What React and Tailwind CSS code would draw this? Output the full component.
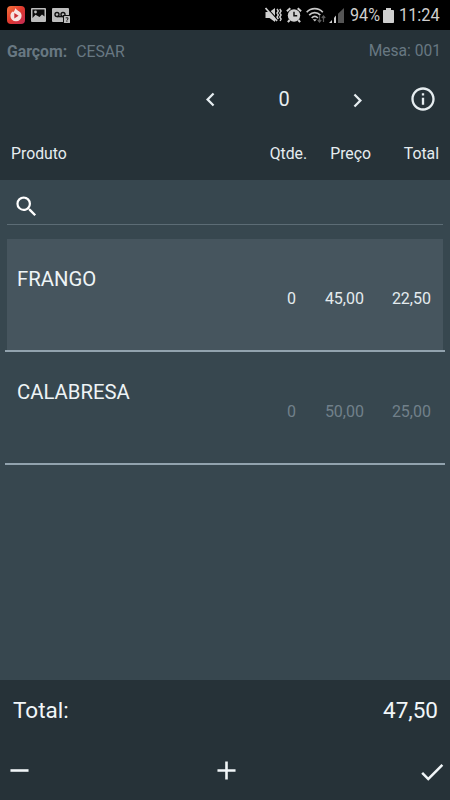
import { useState } from 'react';
import {
  MdAdd,
  MdCheck,
  MdChevronLeft,
  MdChevronRight,
  MdInfoOutline,
  MdRemove,
  MdSearch,
} from 'react-icons/md';

const ITEMS = [
  { id: 1, name: 'FRANGO', qty: 0, price: '45,00', total: '22,50' },
  { id: 2, name: 'CALABRESA', qty: 0, price: '50,00', total: '25,00' },
];

function RecorderIcon() {
  return (
    <svg viewBox="0 0 18 18" className="h-[18px] w-[18px]">
      <defs>
        <linearGradient id="rec" x1="0" y1="0" x2="1" y2="1">
          <stop offset="0" stopColor="#f4743b" />
          <stop offset="0.5" stopColor="#e0392f" />
          <stop offset="1" stopColor="#c02a55" />
        </linearGradient>
      </defs>
      <rect width="18" height="18" rx="4" fill="url(#rec)" />
      <path d="M8.2 2c.4 1.300 1.600 1.500 2.500 2.400C13 5.400 14.600 7.200 14.600 9.700a5.600 5.600 0 0 1-11.200 0c0-2 1-3.400 2.200-4.300L6.400 6C7.300 5 8.100 3.800 8.200 2z" fill="#f7e4e2" />
      <path d="M7.300 7l4.300 2.700-4.300 2.700z" fill="#cc2f35" />
    </svg>
  );
}

function PictureIcon() {
  return (
    <svg viewBox="0 0 15 14" className="h-[14px] w-[15px]">
      <rect width="15" height="14" rx="1" fill="#bdbdbd" />
      <path d="M1.500 1.500h12v7L11 6.500 8.500 9 4.500 6.800l-3 3.200z" fill="#0a0a0a" />
      <circle cx="4.500" cy="4" r="1.400" fill="#bdbdbd" />
    </svg>
  );
}

function VoicemailIcon() {
  return (
    <svg viewBox="0 0 18 15" className="h-[15px] w-[18px]">
      <rect width="17" height="14" rx="1" fill="#bdbdbd" />
      <g fill="none" stroke="#111" strokeWidth="1.400">
        <circle cx="5" cy="6.500" r="2" />
        <circle cx="11" cy="6.500" r="2" />
        <path d="M5 8.600h6" />
      </g>
      <rect x="11" y="7" width="7" height="8" fill="#111" />
      <rect x="12" y="8" width="6" height="7" rx="0.500" fill="#bdbdbd" />
      <path d="M13.700 9.800h2.200v1.500l-1 .7v.6M14.900 13.200v.8" fill="none" stroke="#111" strokeWidth="0.900" />
    </svg>
  );
}

function MuteIcon() {
  return (
    <svg viewBox="0 0 17 16" className="h-4 w-[17px]">
      <path d="M0.500 5h4L10 1v14L4.500 11h-4z" fill="#cfcfcf" />
      <path d="M1.500 0.500l11 12" stroke="#000" strokeWidth="1.200" />
      <path d="M0.500 1l11.500 13" stroke="#cfcfcf" strokeWidth="1.800" />
      <path d="M12 2l1.300 2-1.300 2 1.300 2-1.300 2 1.300 2M14.800 2l1.300 2-1.300 2 1.300 2-1.300 2 1.300 2-1 2" fill="none" stroke="#cfcfcf" strokeWidth="1.400" />
    </svg>
  );
}

function AlarmIcon() {
  return (
    <svg viewBox="0 0 16 16" className="h-4 w-4">
      <path d="M0.900 4.300L4.300 1.200M15.100 4.300l-3.400-3.100M3.700 13l-1.800 2.200M12.300 13l1.800 2.200" stroke="#cfcfcf" strokeWidth="2" />
      <circle cx="8" cy="8.500" r="6.200" fill="#cfcfcf" />
      <path d="M8 4.800v4h3.200" fill="none" stroke="#111" strokeWidth="1.500" />
    </svg>
  );
}

function WifiIcon() {
  return (
    <svg viewBox="0 0 20 16" className="h-4 w-5">
      <g fill="none" stroke="#c8c8c8" strokeWidth="1.700">
        <path d="M0.700 5.200C5 .5 12.500 .5 16.800 5.200" />
        <path d="M3.200 8.200c3.200-3.400 7.900-3.400 11.100 0" />
        <path d="M5.700 11c1.900-1.900 4.300-1.900 6.200 0" />
      </g>
      <path d="M6.800 12.200h4l-2 2.300z" fill="#c8c8c8" />
      <path d="M13.500 9v6M11.800 13l1.700 2 1.700-2M17.500 15V9M15.800 11l1.700-2 1.700 2" fill="none" stroke="#5b5b5b" strokeWidth="1.200" />
    </svg>
  );
}

function SignalIcon() {
  return (
    <svg viewBox="0 0 16 15" className="h-[15px] w-4">
      <path d="M0 15l3-3v3z" fill="#d0d0d0" />
      <path d="M5 15v-5.200L7 7.500V15z" fill="#d0d0d0" />
      <path d="M9 15V5.700L15 0v15z" fill="#555" />
    </svg>
  );
}

function BatteryIcon() {
  return (
    <svg viewBox="0 0 11 15" className="h-[15px] w-[11px]">
      <path d="M3 0h5v2h2.200q.8 0 .8.800v11.400q0 .8-.8.800H.8q-.8 0-.8-.8V2.800Q0 2 .8 2H3z" fill="#cfcfcf" />
    </svg>
  );
}

function StatusBar() {
  return (
    <div className="flex h-[30px] shrink-0 items-center justify-between bg-black pl-[7px] pr-[9px] text-[19px] text-[#cfcfcf]">
      <div className="flex items-center gap-[6px]">
        <RecorderIcon />
        <PictureIcon />
        <VoicemailIcon />
      </div>
      <div className="flex items-center">
        <MuteIcon />
        <span className="ml-[4px]"><AlarmIcon /></span>
        <span className="ml-[4px]"><WifiIcon /></span>
        <span className="ml-[3px]"><SignalIcon /></span>
        <span className="ml-[5px] w-[33px]">
          <span className="block origin-left scale-x-[0.85]">94%</span>
        </span>
        <BatteryIcon />
        <span className="ml-[5px] w-[42px]">
          <span className="block origin-left scale-x-[0.86]">11:24</span>
        </span>
      </div>
    </div>
  );
}

function ItemRow({ item, selected, onSelect }) {
  return (
    <li className="border-b-2 border-[#92a3ae] px-[2px]">
      <button
        className={`flex h-[111px] w-full flex-col pl-[10px] pr-[12px] text-left ${selected ? 'bg-[#46555e]' : ''}`}
        onClick={onSelect}
      >
        <span className="block pt-[25px] text-[20.300px] leading-[30px] text-[#eef4f6]">{item.name}</span>
        <span
          className={`-mt-[6px] flex w-full justify-end text-[16px] leading-[22px] ${selected ? 'text-[#e4ebee]' : 'text-[#71808a]'}`}
        >
          <span className="w-[40px] text-right">{item.qty}</span>
          <span className="w-[68px] text-right">{item.price}</span>
          <span className="w-[67px] text-right">{item.total}</span>
        </span>
      </button>
    </li>
  );
}

export default function App() {
  const [qty, setQty] = useState(0);
  const [selectedId, setSelectedId] = useState(1);

  return (
    <div className="flex h-[800px] w-[450px] flex-col overflow-hidden bg-[#37474f] font-['Roboto',sans-serif] text-[#e6edf0]">
      <StatusBar />

      <header className="h-[150px] shrink-0 bg-[#263238]">
        <div className="flex h-[42px] items-center justify-between pl-[7px] pr-[9px] pt-px text-[15.800px] text-[#687882]">
          <p>
            <span className="font-bold">Garçom:</span>
            <span className="ml-[9px]">CESAR</span>
          </p>
          <p className="pt-px text-[15.600px]">Mesa: 001</p>
        </div>

        <div className="flex h-[55px] items-center pl-[197px]">
          <button onClick={() => setQty(Math.max(0, qty - 1))}>
            <MdChevronLeft className="h-[27px] w-[27px]" />
          </button>
          <span className="w-[120px] pb-px text-center text-[20px]">{qty}</span>
          <button className="pt-[2px]" onClick={() => setQty(qty + 1)}>
            <MdChevronRight className="h-[27px] w-[27px]" />
          </button>
          <MdInfoOutline className="mb-px ml-[38px] h-[28px] w-[28px]" />
        </div>

        <div className="flex h-[52px] items-center pl-[11px] pr-[11px] pt-[2px] text-[15.800px]">
          <span className="flex-1">Produto</span>
          <span>Qtde.</span>
          <span className="ml-[23px]">Preço</span>
          <span className="w-[68px] text-right">Total</span>
        </div>
      </header>

      <main className="flex-1 px-[5px]">
        <div className="mx-[2px] flex h-[45px] items-center border-b border-[#5c6c75] pl-[6px] pt-[9px]">
          <MdSearch className="h-[27px] w-[27px] text-white" />
        </div>

        <ul className="mt-[14px]">
          {ITEMS.map(item => (
            <ItemRow
              key={item.id}
              item={item}
              selected={item.id === selectedId}
              onSelect={() => setSelectedId(item.id)}
            />
          ))}
        </ul>
      </main>

      <footer className="h-[120px] shrink-0 bg-[#263238] text-[#f1f6f8]">
        <div className="flex h-[61px] items-center justify-between pl-[13px] pr-[12px] text-[22.500px]">
          <span>Total:</span>
          <span>47,50</span>
        </div>
        <div className="flex h-[59px] items-center justify-between pl-[4px] pr-[3px]">
          <button><MdRemove className="h-[31px] w-[31px]" /></button>
          <button><MdAdd className="h-[31px] w-[31px]" /></button>
          <button className="pt-[3px]"><MdCheck className="h-[30px] w-[30px]" /></button>
        </div>
      </footer>
    </div>
  );
}
